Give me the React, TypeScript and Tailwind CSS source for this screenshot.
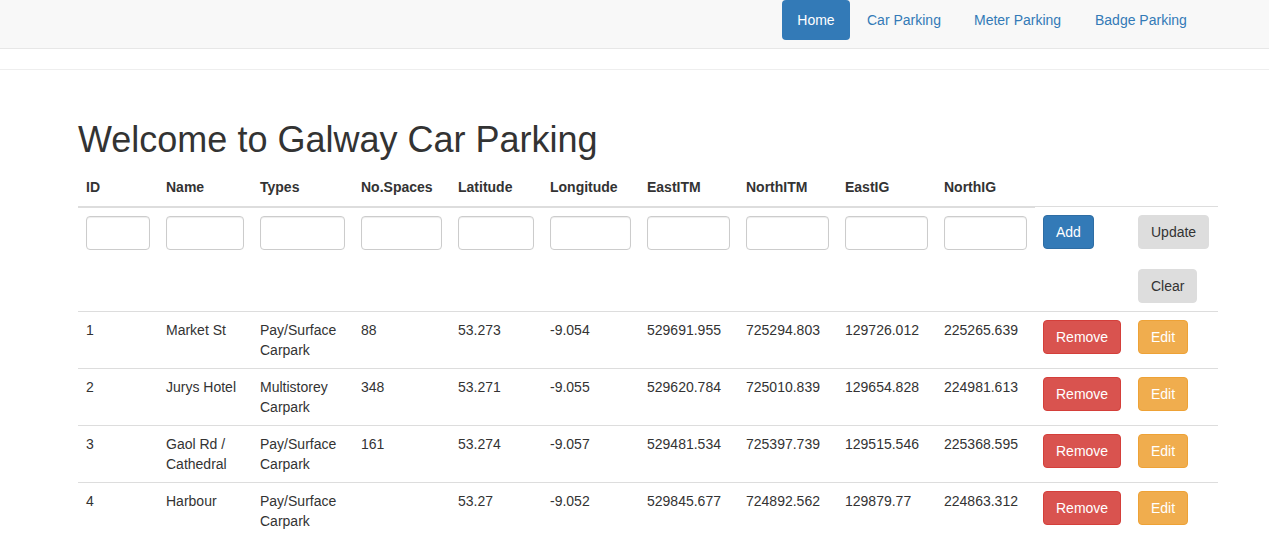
import React from "react";

type CarPark = {
  id: number;
  name: string;
  type: string;
  spaces: string;
  lat: string;
  lng: string;
  eastItm: string;
  northItm: string;
  eastIg: string;
  northIg: string;
};

const carParks: CarPark[] = [
  { id: 1, name: "Market St", type: "Pay/Surface Carpark", spaces: "88", lat: "53.273", lng: "-9.054", eastItm: "529691.955", northItm: "725294.803", eastIg: "129726.012", northIg: "225265.639" },
  { id: 2, name: "Jurys Hotel", type: "Multistorey Carpark", spaces: "348", lat: "53.271", lng: "-9.055", eastItm: "529620.784", northItm: "725010.839", eastIg: "129654.828", northIg: "224981.613" },
  { id: 3, name: "Gaol Rd / Cathedral", type: "Pay/Surface Carpark", spaces: "161", lat: "53.274", lng: "-9.057", eastItm: "529481.534", northItm: "725397.739", eastIg: "129515.546", northIg: "225368.595" },
  { id: 4, name: "Harbour", type: "Pay/Surface Carpark", spaces: "", lat: "53.27", lng: "-9.052", eastItm: "529845.677", northItm: "724892.562", eastIg: "129879.77", northIg: "224863.312" },
];

const headers = ["ID", "Name", "Types", "No.Spaces", "Latitude", "Longitude", "EastITM", "NorthITM", "EastIG", "NorthIG"];
const widths = ["w-[80px]", "w-[94px]", "w-[101px]", "w-[97px]", "w-[92px]", "w-[97px]", "w-[99px]", "w-[99px]", "w-[99px]", "w-[99px]", "w-[95px]", "w-[88px]"];

const navItems = [
  { label: "Home", w: "w-[68px]" },
  { label: "Car Parking", w: "w-[105px]" },
  { label: "Meter Parking", w: "w-[119px]" },
  { label: "Badge Parking", w: "w-[123px]" },
];

const btn = "inline-block px-3 py-1.5 text-[14px] leading-5 border rounded whitespace-nowrap";
const td = "px-2 py-2 align-top leading-5 border-t border-[#ddd]";

const Input = () => (
  <input
    type="text"
    className="block w-full h-[34px] px-3 border border-[#ccc] rounded bg-white shadow-[inset_0_1px_1px_rgba(0,0,0,0.075)]"
  />
);

export default function App() {
  return (
    <div className="min-h-screen bg-white text-[#333] text-[14px] font-['Liberation_Sans',Arial,sans-serif]">
      {/* navbar */}
      <nav className="h-[49px] bg-[#f8f8f8] border-b border-[#e7e7e7] flex justify-end pr-[66px]">
        <ul className="flex gap-[2px]">
          {navItems.map((item, i) => (
            <li key={item.label}>
              <a
                className={
                  i === 0
                    ? `block ${item.w} text-center py-[10px] leading-5 rounded bg-[#337ab7] text-white`
                    : `block ${item.w} pl-[15px] py-[10px] leading-5 whitespace-nowrap text-[#337ab7]`
                }
              >
                {item.label}
              </a>
            </li>
          ))}
        </ul>
      </nav>

      <div className="mt-[20px] h-px bg-[#eee]" />

      <h1 className="ml-[78px] mt-[50px] mb-[10px] text-[36px] leading-[1.1] font-normal">
        Welcome to Galway Car Parking
      </h1>

      <table className="ml-[78px] w-[1140px] table-fixed border-collapse">
        <colgroup>
          {widths.map((w, i) => (
            <col key={i} className={w} />
          ))}
        </colgroup>
        <thead>
          <tr>
            {headers.map((h) => (
              <th key={h} className="px-2 pt-[7px] pb-[9px] text-left font-bold leading-5 align-bottom border-b-2 border-[#ddd]">
                {h}
              </th>
            ))}
          </tr>
        </thead>
        <tbody>
          <tr>
            {headers.map((h) => (
              <td key={h} className={td}>
                <Input />
              </td>
            ))}
            <td className={td}>
              <button className={`${btn} bg-[#337ab7] border-[#2e6da4] text-white`}>Add</button>
            </td>
            <td className={td}>
              <div className="flex flex-col items-start gap-5">
                <button className={`${btn} bg-[#ddd] border-[#ddd] text-[#333]`}>Update</button>
                <button className={`${btn} bg-[#ddd] border-[#ddd] text-[#333]`}>Clear</button>
              </div>
            </td>
          </tr>
          {carParks.map((c) => (
            <tr key={c.id}>
              <td className={td}>{c.id}</td>
              <td className={td}>{c.name}</td>
              <td className={td}>{c.type}</td>
              <td className={td}>{c.spaces}</td>
              <td className={td}>{c.lat}</td>
              <td className={td}>{c.lng}</td>
              <td className={td}>{c.eastItm}</td>
              <td className={td}>{c.northItm}</td>
              <td className={td}>{c.eastIg}</td>
              <td className={td}>{c.northIg}</td>
              <td className={td}>
                <button className={`${btn} bg-[#d9534f] border-[#d43f3a] text-white`}>Remove</button>
              </td>
              <td className={td}>
                <button className={`${btn} bg-[#f0ad4e] border-[#eea236] text-white`}>Edit</button>
              </td>
            </tr>
          ))}
        </tbody>
      </table>
    </div>
  );
}
